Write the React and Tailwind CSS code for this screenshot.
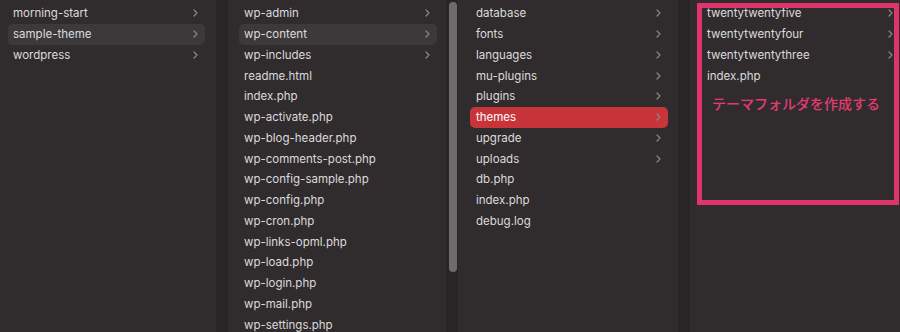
import React from 'react';

const Chevron = () => (
  <svg width="5" height="8" viewBox="0 0 5 8" className="shrink-0">
    <path d="M1 1 L4 4 L1 7" fill="none" stroke="#8b888a" strokeWidth="1.2" strokeLinecap="round" strokeLinejoin="round" />
  </svg>
);

const Row = ({ name, folder, selected, active, ml, mr, pl }) => {
  let bg = '';
  if (selected) bg = 'bg-[#3c393b]';
  if (active) bg = 'bg-[#c7343a]';
  return (
    <div className={`flex h-[20.75px] items-center justify-between rounded-[5px] pr-[7px] ${bg} ${ml} ${mr} ${pl}`}>
      <span className={`whitespace-nowrap text-[11.5px] leading-[16px] ${active ? 'text-white' : 'text-[#dcdadb]'}`}>{name}</span>
      {folder && <Chevron />}
    </div>
  );
};

const Column = ({ items, width, ml, mr, pl, children }) => (
  <div className={`relative h-full shrink-0 bg-[#302c2e] pt-[3px] ${width}`}>
    {items.map((it) => (
      <Row key={it.name} {...it} ml={ml} mr={mr} pl={pl} />
    ))}
    {children}
  </div>
);

const Divider = () => <div className="h-full w-[12px] shrink-0 bg-[#272526]" />;

const col1 = [
  { name: 'morning-start', folder: true },
  { name: 'sample-theme', folder: true, selected: true },
  { name: 'wordpress', folder: true },
];

const col2 = [
  { name: 'wp-admin', folder: true },
  { name: 'wp-content', folder: true, selected: true },
  { name: 'wp-includes', folder: true },
  { name: 'readme.html' },
  { name: 'index.php' },
  { name: 'wp-activate.php' },
  { name: 'wp-blog-header.php' },
  { name: 'wp-comments-post.php' },
  { name: 'wp-config-sample.php' },
  { name: 'wp-config.php' },
  { name: 'wp-cron.php' },
  { name: 'wp-links-opml.php' },
  { name: 'wp-load.php' },
  { name: 'wp-login.php' },
  { name: 'wp-mail.php' },
  { name: 'wp-settings.php' },
];

const col3 = [
  { name: 'database', folder: true },
  { name: 'fonts', folder: true },
  { name: 'languages', folder: true },
  { name: 'mu-plugins', folder: true },
  { name: 'plugins', folder: true },
  { name: 'themes', folder: true, active: true },
  { name: 'upgrade', folder: true },
  { name: 'uploads', folder: true },
  { name: 'db.php' },
  { name: 'index.php' },
  { name: 'debug.log' },
];

const col4 = [
  { name: 'twentytwentyfive', folder: true },
  { name: 'twentytwentyfour', folder: true },
  { name: 'twentytwentythree', folder: true },
  { name: 'index.php' },
];

export default function App() {
  return (
    <div
      className="flex h-[332px] w-[900px] overflow-hidden bg-[#302c2e]"
      style={{ fontFamily: 'Inter, "Noto Sans", "Noto Sans CJK JP", sans-serif' }}
    >
      <Column items={col1} width="w-[216px]" ml="ml-[8px]" mr="mr-[11px]" pl="pl-[5px]" />
      <Divider />
      <Column items={col2} width="w-[218px]" ml="ml-[11px]" mr="mr-[9px]" pl="pl-[5px]" />
      {/* scrollbar */}
      <div className="h-full w-[12px] shrink-0 bg-[#272526] px-[3px] pt-[2px]">
        <div className="h-[270px] w-[8px] rounded-full bg-[#6d6b6c]" />
      </div>
      <Column items={col3} width="w-[220px]" ml="ml-[12px]" mr="mr-[10px]" pl="pl-[6px]" />
      <Divider />
      <Column items={col4} width="w-[210px]" ml="ml-[12px]" mr="mr-0" pl="pl-[5px]">
        {/* annotation box */}
        <div className="absolute left-[7px] top-[3px] h-[202px] w-[202px] border-[5px] border-[#e0356b]">
          <div
            className="mt-[88px] pl-[10px] text-[14px] font-medium leading-none text-[#e43b70]"
            style={{ fontFamily: '"Noto Sans CJK JP", sans-serif' }}
          >
            テーマフォルダを作成する
          </div>
        </div>
      </Column>
    </div>
  );
}
